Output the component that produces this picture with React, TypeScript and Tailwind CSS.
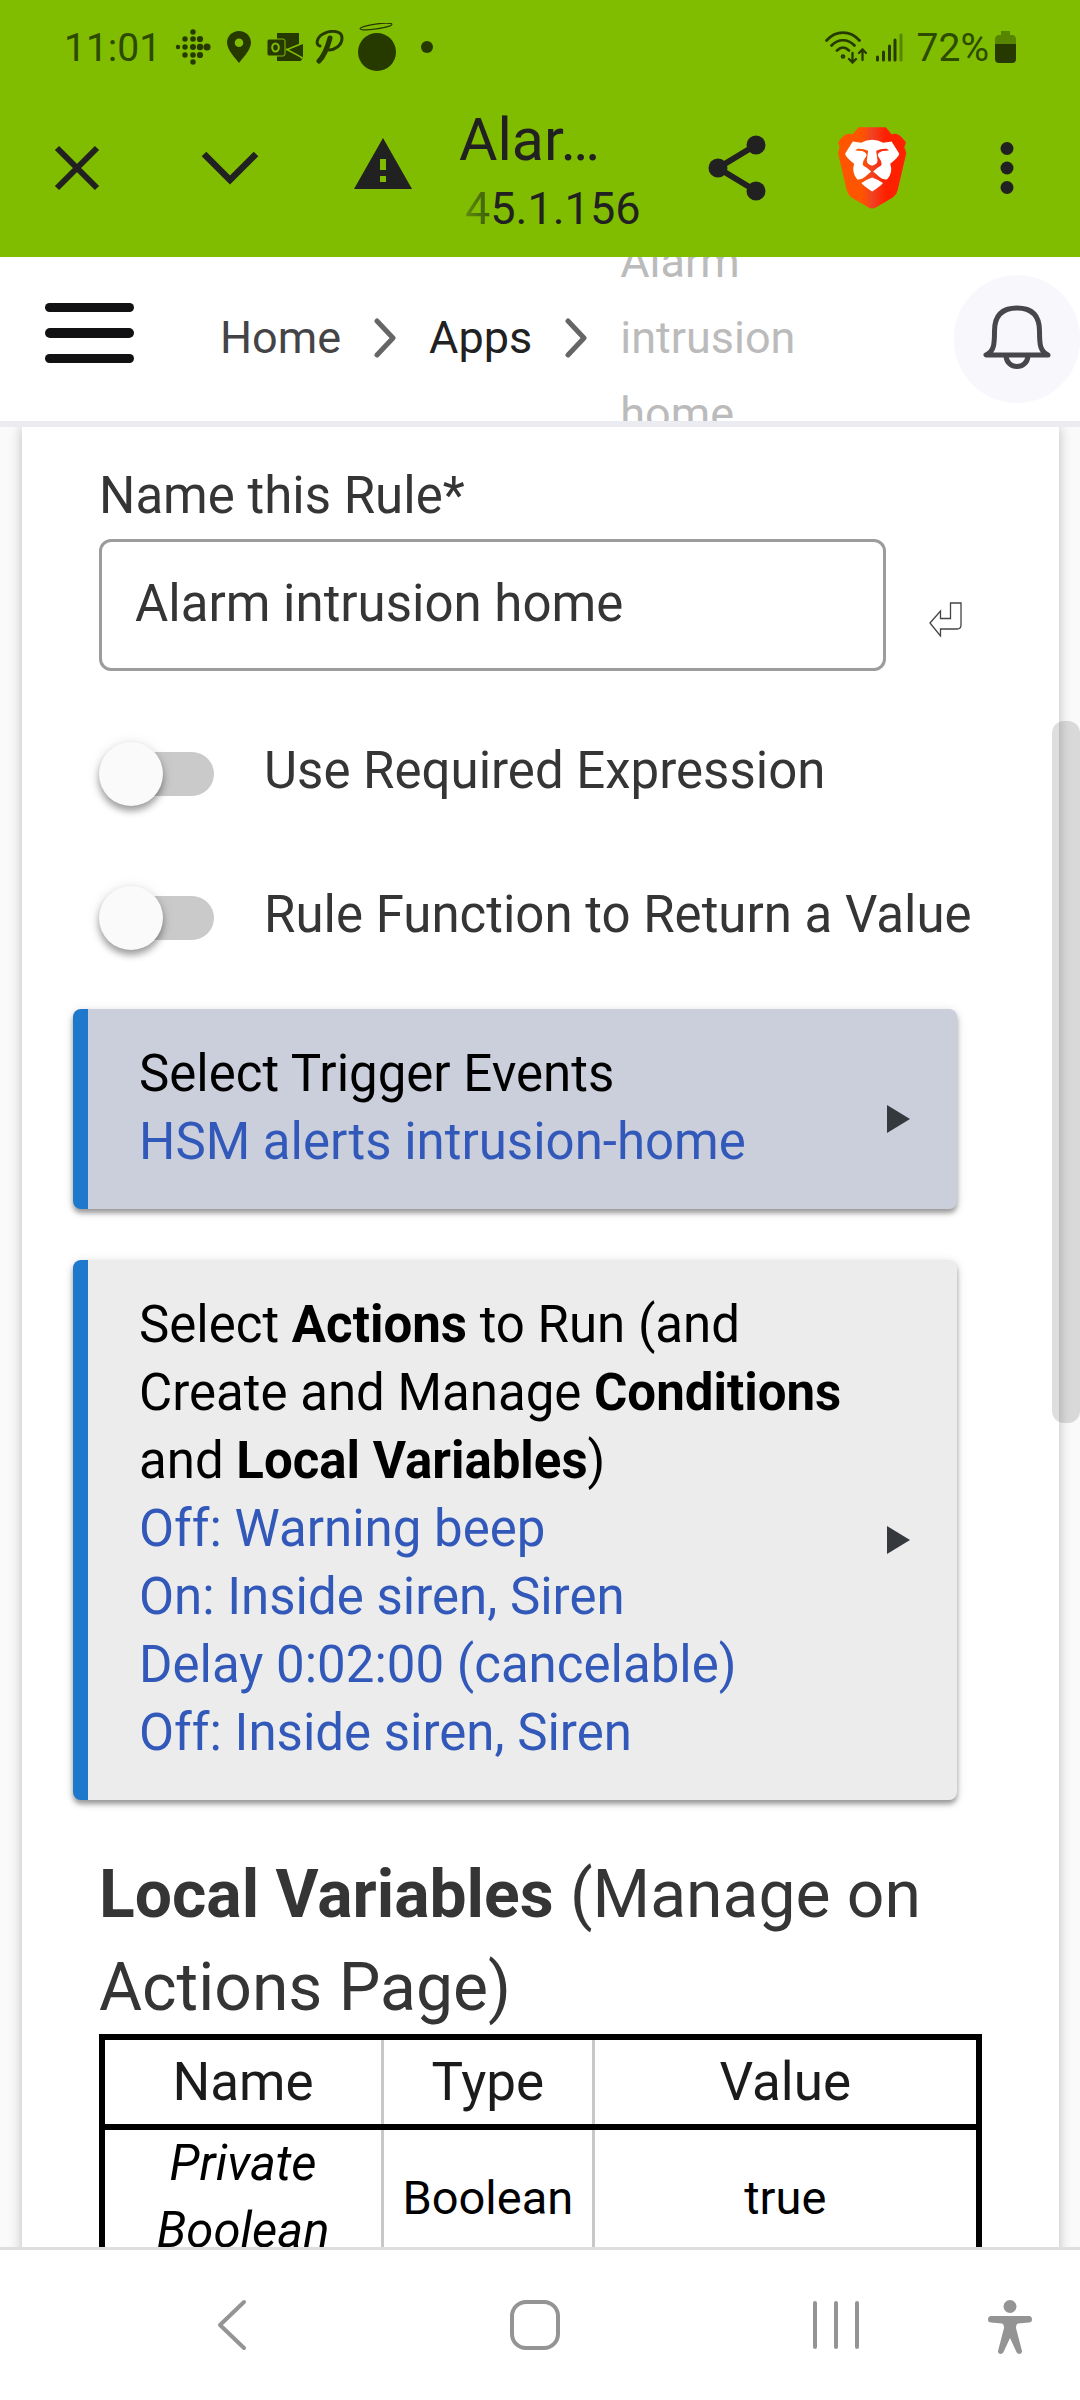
import React, { useState } from 'react'

const fitbitDots = [
    [18, 3, 2.7],
    [10, 10, 2.7], [18, 10, 2.8], [25, 10, 3.1],
    [3, 18, 2.2], [10, 18, 2.7], [18, 18, 3], [25, 18, 3.2], [32, 18, 3.6],
    [10, 26, 2.7], [18, 26, 2.8], [25, 26, 3.1],
    [18, 33, 2.7],
]

const StatusBar = () => {
    return (
        <div className="flex h-[94px] items-center justify-between pr-16 pl-16 text-[39px] text-[#2c4a00]">
            <div className="flex items-center">
                <span className="pt-[3px]">11:01</span>
                {/* Fitbit */}
                <svg className="ml-[14px] h-9 w-9" viewBox="0 0 36 36" fill="#263a00">
                    {fitbitDots.map(([x, y, r]) => (
                        <circle key={`${x}-${y}`} cx={x} cy={y} r={r} />
                    ))}
                </svg>
                {/* Location pin */}
                <svg className="ml-4 h-8 w-6" viewBox="0 0 24 32" fill="#263a00">
                    <path fillRule="evenodd" d="M12 0C5.4 0 0 5 0 11.600C0 19 9 28 12 32C15 28 24 19 24 11.600C24 5 18.600 0 12 0ZM12 7.500A4.300 4.300 0 1 1 12 16.100A4.300 4.300 0 1 1 12 7.500Z" />
                </svg>
                {/* Outlook */}
                <svg className="ml-4 h-[30px] w-9" viewBox="0 0 36 30">
                    <path d="M10 1H32V13L20 17L32 24L35 28L33 29H10V25H19V4H10Z" fill="#263a00" />
                    <path d="M10 1H32V12L22 17L35 28H10Z" fill="#263a00" />
                    <path d="M36 12V27L20 18Z" fill="#263a00" />
                    <path d="M19 17L36 26M19 18L36 11" stroke="#80bc00" strokeWidth="1.5" />
                    <rect x="0" y="7" width="18" height="17" rx="2" fill="#263a00" stroke="#80bc00" />
                    <ellipse cx="8.500" cy="15.500" rx="3.300" ry="4" fill="none" stroke="#80bc00" strokeWidth="2" />
                </svg>
                {/* Script letter mark */}
                <svg className="ml-3 h-[34px] w-[30px]" viewBox="0 0 30 34" fill="none" stroke="#263a00" strokeLinecap="round">
                    <path d="M4 31C8 27 12 19 15 8" strokeWidth="5" />
                    <path d="M5 16C0 15 2 7 8 4C15 0 27 0 27 8C27 16 19 20 14 20" strokeWidth="3" />
                </svg>
                {/* Halo */}
                <svg className="ml-3 h-12 w-10" viewBox="0 0 40 48">
                    <ellipse cx="19" cy="3.500" rx="16" ry="2.500" fill="none" stroke="#263a00" strokeWidth="1.300" transform="rotate(-8 19 3.500)" />
                    <circle cx="20" cy="29" r="19" fill="#263a00" />
                </svg>
                <span className="ml-6 h-3 w-3 rounded-full bg-[#263a00]" />
            </div>

            <div className="flex items-center">
                {/* Wifi with traffic arrows */}
                <svg className="h-[34px] w-[42px]" viewBox="0 0 42 34" fill="none" stroke="#263a00" strokeWidth="2.700" strokeLinecap="round">
                    <path d="M1.500 10.500C11 0 25 0 34.500 10.500M6.500 15.500C13 8.500 23 8.500 29.500 15.500M12 20.500C16 16.500 20 16.500 24 20.500" />
                    <circle cx="18" cy="26.500" r="1" />
                    <path d="M27.500 23V32M24 29L27.500 32.500L31 29M37.500 30V20M34 23L37.500 19.500L41 23" strokeWidth="2.300" />
                </svg>
                {/* Signal */}
                <svg className="ml-2 h-[30px] w-7" viewBox="0 0 28 30" fill="none" stroke="#263a00" strokeWidth="3" strokeLinecap="round">
                    <path d="M2.500 25V28M8.500 20V28M14.500 14V28M20 8V28" />
                    <path d="M26 3V28" stroke="#588500" />
                </svg>
                <span className="ml-[14px] pt-[3px]">72%</span>
                {/* Battery */}
                <svg className="ml-[6px] h-8 w-[21px]" viewBox="0 0 21 32">
                    <path d="M6 0H15V4H18Q21 5 21 8V14H0V8Q0 5 3 4H6Z" fill="#588500" />
                    <path d="M0 13H21V28Q21 32 17 32H4Q0 32 0 28Z" fill="#263a00" />
                </svg>
            </div>
        </div>
    )
}

const BraveLogo = () => {
    return (
        <svg className="h-[82px] w-[70px]" viewBox="45 80 207 245">
            <defs>
                <linearGradient id="shield" x1="0" x2="1" y1="0" y2="0">
                    <stop offset="0.35" stopColor="#ff5500" />
                    <stop offset="0.5" stopColor="#f04123" />
                    <stop offset="0.7" stopColor="#ff2000" />
                </linearGradient>
            </defs>
            <path fill="url(#shield)" d="M108 81H190L207 102C225 97 232 104 250 126L245 140L251 158L226 265C223 280 216 287 207 293L161 320Q149 327 137 320L91 293C82 287 76 280 72 265L47 158L52 140L47 126C64 104 72 97 91 102Z" />
            <path fill="#fff" d="M91 123L116 127Q149 109 182 127L207 123L230 160Q229 169 203 190Q212 215 194 236Q181 239 170 229L152 213Q163 202 175 196Q179 190 175 181L166 166Q164 157 180 152L199 150L193 145Q175 144 161 151L165 181Q165 191 149 196Q133 191 133 181L137 151Q123 144 105 145L98 150L119 152Q134 157 132 166L123 181Q119 190 123 196Q135 202 146 213L128 229Q116 239 104 236Q87 215 95 190Q69 169 68 160Z" />
            <path fill="#fff" d="M149 231Q163 236 181 247Q179 252 149 273Q119 252 117 247Q135 236 149 231Z" />
        </svg>
    )
}

const BrowserBar = () => {
    return (
        <div className="flex h-[163px] items-center pr-[6px] pb-4 text-[#212121]">
            <button aria-label="Close" className="flex h-24 w-[153px] items-center justify-center">
                <svg className="h-12 w-12" viewBox="0 0 48 48" fill="none" stroke="currentColor" strokeWidth="6">
                    <path d="M4 4L44 44M44 4L4 44" />
                </svg>
            </button>
            <button aria-label="Minimize" className="flex h-24 w-[153px] items-center justify-center">
                <svg className="h-9 w-[60px]" viewBox="0 0 60 36" fill="none" stroke="currentColor" strokeWidth="6.500">
                    <path d="M4 4L30 30L56 4" />
                </svg>
            </button>
            <button aria-label="Connection is not secure" className="flex h-24 w-[153px] items-center justify-center pb-2">
                <svg className="h-[51px] w-[58px]" viewBox="0 0 58 51" fill="currentColor">
                    <path fillRule="evenodd" d="M29 0L58 51H0ZM26 21V32H32V21ZM26 38V44H32V38Z" />
                </svg>
            </button>
            <div className="flex min-w-0 flex-1 flex-col pt-3">
                <p className="text-[59px] leading-[70px]">Alar…</p>
                <p className="pl-[6px] text-[45px] leading-[68px]">
                    <span className="bg-linear-to-r from-[#5f8c06] to-[#3c5c0c] bg-clip-text text-transparent">4</span>
                    5.1.156
                </p>
            </div>
            <button aria-label="Share" className="flex h-24 w-[135px] items-center justify-center">
                <svg className="h-[66px] w-[58px]" viewBox="0 0 58 66" fill="currentColor">
                    <path d="M48 10L10 33L48 56" fill="none" stroke="currentColor" strokeWidth="6" />
                    <circle cx="48" cy="10" r="9.500" />
                    <circle cx="10" cy="33" r="9.500" />
                    <circle cx="48" cy="56" r="9.500" />
                </svg>
            </button>
            <button aria-label="Brave shields" className="flex h-24 w-[135px] items-center justify-center">
                <BraveLogo />
            </button>
            <button aria-label="More options" className="flex h-24 w-[135px] items-center justify-center">
                <svg className="h-[52px] w-[14px]" viewBox="0 0 14 52" fill="currentColor">
                    <circle cx="7" cy="6.500" r="6.500" />
                    <circle cx="7" cy="26" r="6.500" />
                    <circle cx="7" cy="45.500" r="6.500" />
                </svg>
            </button>
        </div>
    )
}

const Separator = () => {
    return (
        <svg className="h-10 w-6 shrink-0" viewBox="0 0 24 40" fill="none" stroke="#666" strokeWidth="5" strokeLinecap="round" strokeLinejoin="round">
            <path d="M4 3L20 20L4 37" />
        </svg>
    )
}

const AppHeader = () => {
    return (
        <header className="flex h-[170px] shrink-0 items-center justify-between overflow-hidden border-b-6 border-[#ebecf2] bg-white pl-[45px]">
            <div className="flex items-center">
                <button aria-label="Menu" className="flex w-[89px] flex-col gap-4 pb-3">
                    <span className="h-[9px] w-full rounded-full bg-[#111113]" />
                    <span className="h-[10px] w-full rounded-full bg-[#111113]" />
                    <span className="h-[9px] w-full rounded-full bg-[#111113]" />
                </button>
                <nav className="ml-[86px] flex items-center pb-[2px] text-[45px] leading-[76px]">
                    <a href="#" className="text-[#444447]">Home</a>
                    <span className="ml-8"><Separator /></span>
                    <a href="#" className="ml-8 text-[#212121]">Apps</a>
                    <span className="ml-8"><Separator /></span>
                    <span className="ml-8 w-44 text-[#bbb]">Alarm intrusion home</span>
                </nav>
            </div>
            <button aria-label="Notifications" className="flex h-32 w-[126px] items-center justify-center rounded-full bg-[#f7f7fc] pb-1">
                <svg className="h-16 w-[68px]" viewBox="0 0 68 64" fill="none" stroke="#47474b" strokeWidth="5" strokeLinecap="round" strokeLinejoin="round">
                    <path d="M3 50H65C57 46 56.500 40 56.500 26C56.500 10 48 3 34 3C20 3 11.500 10 11.500 26C11.500 40 11 46 3 50Z" />
                    <path d="M23 51C24 65 44 65 45 51" />
                </svg>
            </button>
        </header>
    )
}

type ToggleProps = {
    id: string
    label: string
}

const Toggle = ({ id, label }: ToggleProps) => {
    const [on, setOn] = useState(false)

    return (
        <div className="flex h-36 items-center">
            <span className="relative flex h-16 w-[115px] shrink-0 items-center">
                <input
                    id={id}
                    type="checkbox"
                    checked={on}
                    onChange={() => setOn(!on)}
                    className="peer ml-2 h-11 w-full appearance-none rounded-full bg-[#cacaca] checked:bg-blue-300"
                />
                {/* Thumb */}
                <span className="pointer-events-none absolute top-0 left-0 h-16 w-16 rounded-full bg-[#fafafa] shadow-[0_5px_7px_rgba(0,0,0,0.35),0_1px_14px_rgba(0,0,0,0.1)] peer-checked:left-[51px]" />
            </span>
            <label htmlFor={id} className="ml-[50px] pb-[6px] whitespace-nowrap">{label}</label>
        </div>
    )
}

type RuleButtonProps = {
    active?: boolean
    title: React.ReactNode
    lines: string[]
}

const RuleButton = ({ active, title, lines }: RuleButtonProps) => {
    return (
        <button
            className={`mr-[25px] -ml-[26px] flex items-center justify-between rounded-lg border-l-15 border-[#1e78cc] pt-[31px] pr-[46px] pb-[33px] pl-[51px] text-left shadow-[0_4px_5px_rgba(0,0,0,0.35),0_2px_12px_rgba(0,0,0,0.12)] ${active ? 'bg-[#cacfdb]' : 'bg-[#ececec]'}`}
        >
            <span className="flex flex-1 flex-col pr-6">
                <span className="text-black">{title}</span>
                {lines.map((line) => (
                    <span key={line} className="text-[#3259ba]">{line}</span>
                ))}
            </span>
            <svg className="mt-[22px] h-[30px] w-[25px] shrink-0" viewBox="0 0 25 30" fill="#35383d">
                <path d="M1 1L24 15L1 29Z" />
            </svg>
        </button>
    )
}

const RuleForm = () => {
    const [name, setName] = useState('Alarm intrusion home')

    return (
        <div className="mr-[21px] ml-[22px] flex min-h-full flex-col bg-white pt-[35px] pr-[77px] pl-[77px] text-[51px] leading-[68px] text-[#353535] shadow-[0_0_12px_rgba(0,0,0,0.25)]">
            {/* Rule name */}
            <label htmlFor="rule-name">Name this Rule*</label>
            <div className="mt-[9px] flex items-center gap-[43px]">
                <input
                    id="rule-name"
                    type="text"
                    value={name}
                    onChange={(e) => setName(e.target.value)}
                    className="h-[132px] min-w-0 flex-1 rounded-xl border-3 border-[#9c9c9c] bg-white px-[33px] pb-[3px] outline-none"
                />
                <button aria-label="Save name" className="mt-7 mr-5">
                    <svg className="h-9 w-[33px]" viewBox="0 0 33 36" fill="none" stroke="#444" strokeWidth="1.300">
                        <path d="M1 22L11.500 10V17.500H21.500V2H32V24Q32 28 28 28H11.500V35Z" />
                    </svg>
                </button>
            </div>

            {/* Options */}
            <div className="mt-[31px]">
                <Toggle id="required-expression" label="Use Required Expression" />
                <Toggle id="return-value" label="Rule Function to Return a Value" />
            </div>

            {/* Triggers and actions */}
            <div className="mt-[19px] flex flex-col gap-[51px]">
                <RuleButton active title="Select Trigger Events" lines={['HSM alerts intrusion-home']} />
                <RuleButton
                    title={
                        <>
                            Select <b>Actions</b> to Run (and Create and Manage <b>Conditions</b> and <b>Local Variables</b>)
                        </>
                    }
                    lines={[
                        'Off: Warning beep',
                        'On: Inside siren, Siren',
                        'Delay 0:02:00 (cancelable)',
                        'Off: Inside siren, Siren',
                    ]}
                />
            </div>

            {/* Local variables */}
            <h2 className="mt-12 text-[66px] leading-[93px]">
                <b>Local Variables</b> (Manage on Actions Page)
            </h2>
            <table className="w-full border-collapse border-6 border-black text-center text-[47px] leading-[67px] text-black">
                <thead>
                    <tr className="border-b-6 border-black text-[53px] text-[#1b1b1b]">
                        <th className="h-[90px] w-[32%] border-r-3 border-[#c8c8c8] font-normal">Name</th>
                        <th className="w-[24%] border-r-3 border-[#c8c8c8] font-normal">Type</th>
                        <th className="font-normal">Value</th>
                    </tr>
                </thead>
                <tbody>
                    <tr>
                        <td className="border-r-3 border-[#c8c8c8] px-8 text-[49px] italic">Private Boolean</td>
                        <td className="border-r-3 border-[#c8c8c8]">Boolean</td>
                        <td>true</td>
                    </tr>
                </tbody>
            </table>
        </div>
    )
}

const SystemNav = () => {
    return (
        <footer className="flex h-[153px] shrink-0 items-center border-t-3 border-[#dedede] bg-white text-[#949494]">
            <button aria-label="Back" className="flex w-[43%] justify-center">
                <svg className="h-[52px] w-[30px]" viewBox="0 0 30 52" fill="none" stroke="currentColor" strokeWidth="4" strokeLinecap="round" strokeLinejoin="round">
                    <path d="M27 3L3 26L27 49" />
                </svg>
            </button>
            <button aria-label="Home" className="flex w-[13%] justify-center">
                <svg className="h-[52px] w-[52px]" viewBox="0 0 52 52" fill="none" stroke="currentColor" strokeWidth="4">
                    <rect x="3" y="3" width="46" height="46" rx="14" />
                </svg>
            </button>
            <button aria-label="Recent apps" className="flex flex-1 justify-center pl-20">
                <svg className="h-[50px] w-12" viewBox="0 0 48 50" fill="none" stroke="currentColor" strokeWidth="4" strokeLinecap="round">
                    <path d="M3 3V47M24 3V47M45 3V47" />
                </svg>
            </button>
            <button aria-label="Accessibility" className="mt-1 mr-12">
                <svg className="h-[54px] w-11" viewBox="0 0 44 54" fill="currentColor">
                    <circle cx="22" cy="6.500" r="6.500" />
                    <path d="M3 16H41Q44 16 44 19.500Q44 22.500 41 22.500L30 23.500Q28 24 28 28L34 51Q34 54 31 54Q29 54 28 51L22 38L16 51Q15 54 13 54Q10 54 10 51L16 28Q16 24 14 23.500L3 22.500Q0 22.500 0 19.500Q0 16 3 16Z" />
                </svg>
            </button>
        </footer>
    )
}

const App = () => {
    return (
        <div className="flex h-screen flex-col overflow-hidden bg-[#fafafa] font-[Roboto,sans-serif]">
            {/* Phone status and browser toolbar */}
            <div className="shrink-0 bg-[#80bc00]">
                <StatusBar />
                <BrowserBar />
            </div>

            <AppHeader />

            {/* Page content */}
            <main className="relative min-h-0 flex-1 overflow-hidden">
                <RuleForm />
                <div className="absolute top-[294px] right-0 h-[702px] w-7 rounded-xl bg-black/13" />
            </main>

            <SystemNav />
        </div>
    )
}

export default App
